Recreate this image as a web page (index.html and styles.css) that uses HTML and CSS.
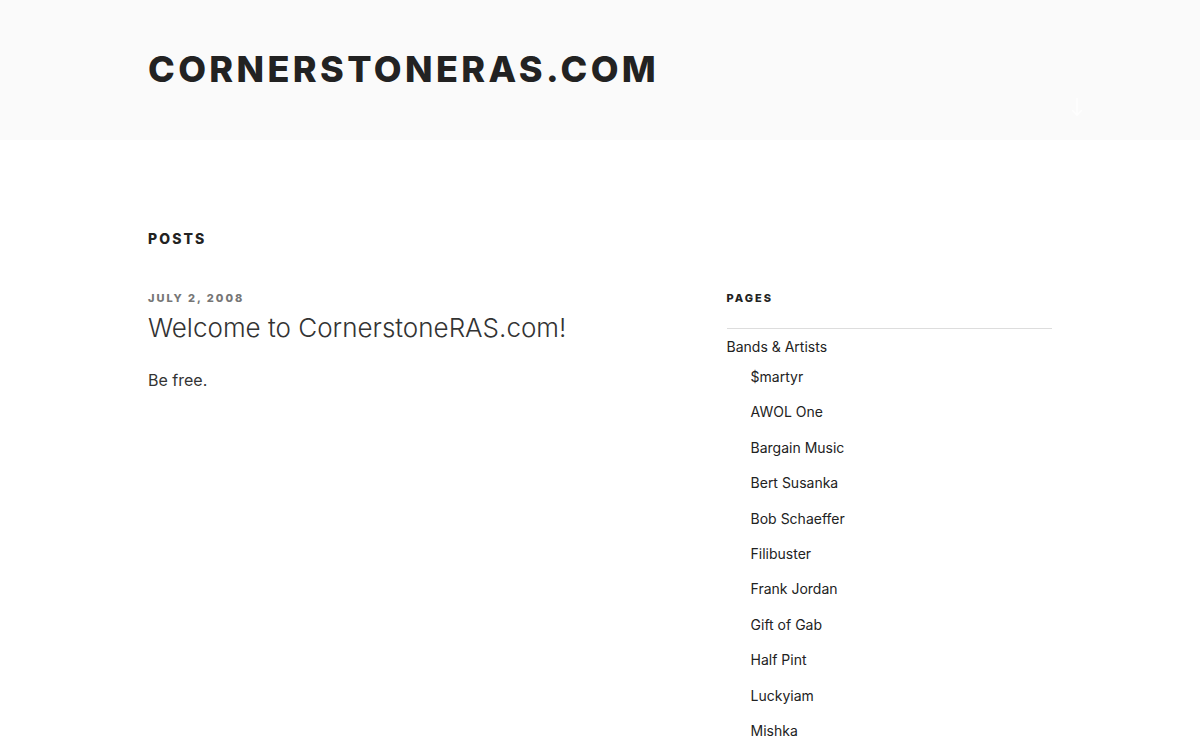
FILE: index.html
```html
<!DOCTYPE html>
<html lang="en">
<head>
    <meta charset="UTF-8">
    <meta name="viewport" content="width=device-width, initial-scale=1.0">
    <title>CornerstoneRAS.com</title>
    <link rel="stylesheet" href="styles.css">
</head>
<body>
    <header class="site-header">
        <div class="header-wrap">
            <h1 class="site-title"><a href="#">CornerstoneRAS.com</a></h1>
            <a href="#content" class="scroll-down" aria-label="Scroll down to content">
                <svg width="14" height="20" viewBox="0 0 14 20" fill="none" stroke="#ffffff" stroke-width="1.6">
                    <path d="M7 1v17"/>
                    <path d="M2 13l5 5 5-5"/>
                </svg>
            </a>
        </div>
    </header>

    <main id="content" class="site-content">
        <h2 class="page-title">Posts</h2>

        <div class="content-row">
            <div class="primary">
                <article class="post">
                    <div class="entry-meta">July 2, 2008</div>
                    <h3 class="entry-title"><a href="#">Welcome to CornerstoneRAS.com!</a></h3>
                    <p class="entry-content">Be free.</p>
                </article>
            </div>

            <aside class="sidebar">
                <h2 class="widget-title">Pages</h2>
                <ul class="page-list">
                    <li>
                        <a href="#">Bands &amp; Artists</a>
                        <ul class="children">
                            <li><a href="#">$martyr</a></li>
                            <li><a href="#">AWOL One</a></li>
                            <li><a href="#">Bargain Music</a></li>
                            <li><a href="#">Bert Susanka</a></li>
                            <li><a href="#">Bob Schaeffer</a></li>
                            <li><a href="#">Filibuster</a></li>
                            <li><a href="#">Frank Jordan</a></li>
                            <li><a href="#">Gift of Gab</a></li>
                            <li><a href="#">Half Pint</a></li>
                            <li><a href="#">Luckyiam</a></li>
                            <li><a href="#">Mishka</a></li>
                        </ul>
                    </li>
                </ul>
            </aside>
        </div>
    </main>
</body>
</html>
```

FILE: styles.css
```css
body {
    margin: 0;
    font-family: Inter, "Liberation Sans", Arial, sans-serif;
    font-size: 16px;
    color: #333;
    background: #fff;
}
a {
    color: inherit;
    text-decoration: none;
}
ul {
    list-style: none;
    margin: 0;
    padding: 0;
}

.site-header {
    background: #fafafa;
    height: 140px;
}
.header-wrap {
    height: 100%;
    box-sizing: border-box;
    padding: 47px 116px 0 148px;
    display: flex;
    justify-content: space-between;
}
.site-title {
    margin: 0;
    font-size: 36px;
    font-weight: 800;
    line-height: 45px;
    letter-spacing: 0.094em;
    text-transform: uppercase;
    color: #222;
}
.scroll-down {
    align-self: flex-start;
    margin-top: 50px;
    opacity: 0.9;
}

.site-content {
    padding: 89px 148px 0;
}
.page-title {
    margin: 0;
    font-size: 14px;
    font-weight: 800;
    line-height: 20px;
    letter-spacing: 0.15em;
    text-transform: uppercase;
    color: #222;
}
.content-row {
    display: flex;
    justify-content: space-between;
    margin-top: 41px;
}
.primary {
    width: 58%;
}
.sidebar {
    width: 36%;
}

.entry-meta {
    font-size: 11px;
    font-weight: 800;
    line-height: 16px;
    letter-spacing: 0.18em;
    text-transform: uppercase;
    color: #767676;
}
.entry-title {
    margin: 6px 0 0;
    font-size: 26px;
    font-weight: 300;
    line-height: 32px;
    color: #333;
}
.entry-content {
    margin: 24px 0 0;
    font-size: 16px;
    font-weight: 400;
    line-height: 24px;
}

.widget-title {
    margin: 0;
    font-size: 11px;
    font-weight: 800;
    line-height: 16px;
    letter-spacing: 0.18em;
    text-transform: uppercase;
    color: #222;
    padding-bottom: 22px;
    border-bottom: 1px solid #ddd;
}
.page-list {
    font-size: 14px;
    font-weight: 400;
    line-height: 20px;
    color: #222;
}
.page-list > li {
    padding-top: 8px;
}
.children {
    padding-left: 24px;
}
.children li {
    padding-top: 10px;
}
.children li + li {
    padding-top: 15.4px;
}
```
